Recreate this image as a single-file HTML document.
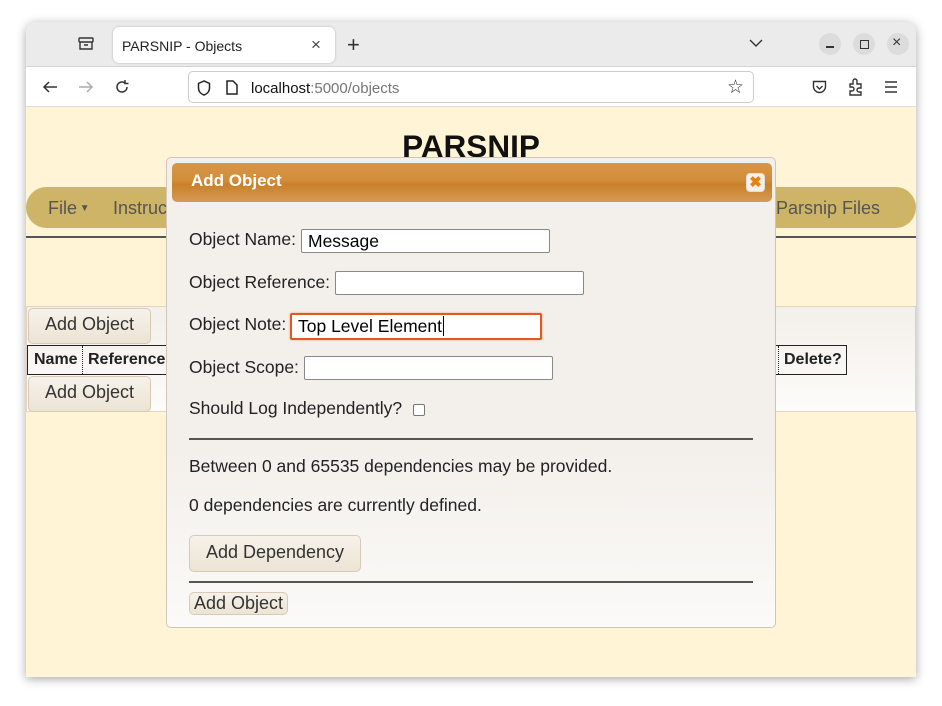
<!DOCTYPE html>
<html><head><style>
*{box-sizing:border-box;margin:0;padding:0}
body{width:942px;height:706px;background:#fff;font-family:"Liberation Sans",sans-serif;position:relative;overflow:hidden}
.win{position:absolute;left:26px;top:22px;width:890px;height:655px;border-radius:10px 10px 0 0;overflow:hidden;box-shadow:0 2px 10px rgba(0,0,0,.35);background:#fff4d6}
.tabbar{position:absolute;left:0;top:0;width:890px;height:45px;background:#ebebeb;border-bottom:1px solid #d4d4d4}
.tab{position:absolute;left:87px;top:5px;width:222px;height:36px;background:#fff;border-radius:6px;box-shadow:0 0 2px rgba(0,0,0,.25);font-size:14px;color:#222;padding:11px 0 0 9px}
.toolbar{position:absolute;left:0;top:45px;width:890px;height:40px;background:#fff;border-bottom:1px solid #ddd}
.url{position:absolute;left:162px;top:4px;width:566px;height:32px;border:1px solid #ccc;border-radius:5px;font-size:15px;padding:8px 0 0 62px;color:#111}
.abs{position:absolute}
.circ{position:absolute;width:22px;height:22px;border-radius:50%;background:#dcdcdc;top:11px}
.nav{position:absolute;left:0;top:165px;width:890px;height:41px;background:#cdb466;border-radius:21px;font-size:18px;color:#555}
.btn{position:absolute;border:1px solid #d8c9b4;border-radius:5px;background:linear-gradient(#f6f2ea,#ece4d4);font-size:18px;color:#333;text-align:center}
.dlg{position:absolute;left:140px;top:135px;width:610px;height:471px;background:linear-gradient(#f3f0eb 0,#f3f0eb 62%,#fbfaf8 100%);border:1px solid #cfc6bb;border-radius:5px}
.hd{position:absolute;left:5px;top:5px;width:600px;height:39px;border-radius:5px;background:linear-gradient(#d69648,#d28d38 45%,#c98029 55%,#d69a55);color:#fff;font-weight:bold;font-size:17px;padding:8px 0 0 19px}
.lbl{position:absolute;font-size:17.5px;color:#222}
.inp{position:absolute;height:24px;background:#fff;border:1px solid #888;border-radius:2px;font-size:17.5px;padding:1px 6px;color:#000}
.hr{position:absolute;left:22px;width:564px;height:2px;background:#555}
</style></head><body>
<div class="win">
 <div class="tabbar">
  <svg class="abs" style="left:52px;top:15px" width="16" height="14"><rect x="1" y="1" width="14" height="4" rx="1" fill="none" stroke="#333" stroke-width="1.4"/><path d="M2 5v7h12V5M6 8h4" fill="none" stroke="#333" stroke-width="1.4"/></svg>
  <div class="tab">PARSNIP - Objects<span class="abs" style="left:198px;top:8px;font-size:17px;color:#444">×</span></div>
  <span class="abs" style="left:321px;top:10px;font-size:22px;color:#333">+</span>
  <svg class="abs" style="left:723px;top:17px" width="14" height="9"><path d="M1 1l6 6 6-6" fill="none" stroke="#333" stroke-width="1.4"/></svg>
  <div class="circ" style="left:793px"></div><div class="abs" style="left:800px;top:24px;width:8px;height:1.5px;background:#333"></div>
  <div class="circ" style="left:827px"></div><div class="abs" style="left:834px;top:18px;width:9px;height:9px;border:1.4px solid #333"></div>
  <div class="circ" style="left:861px"></div><span class="abs" style="left:866px;top:12px;font-size:16px;color:#333">×</span>
 </div>
 <div class="toolbar">
  <svg class="abs" style="left:16px;top:14px" width="16" height="12"><path d="M15 6H2M7 1L2 6l5 5" fill="none" stroke="#333" stroke-width="1.5"/></svg>
  <svg class="abs" style="left:52px;top:14px" width="16" height="12"><path d="M1 6h13M9 1l5 5-5 5" fill="none" stroke="#aaa" stroke-width="1.5"/></svg>
  <svg class="abs" style="left:88px;top:12px" width="16" height="16"><path d="M13 8a5 5 0 11-2-4M11 1v3.5h3.5" fill="none" stroke="#333" stroke-width="1.5"/></svg>
  <div class="url">
   <svg class="abs" style="left:8px;top:8px" width="14" height="16"><path d="M7 1L1.5 3.5V8c0 3.5 2.5 6 5.5 7 3-1 5.5-3.5 5.5-7V3.5z" fill="none" stroke="#222" stroke-width="1.5"/></svg>
   <svg class="abs" style="left:37px;top:8px" width="12" height="15"><path d="M1 1h6l4 4v9H1z" fill="none" stroke="#222" stroke-width="1.5"/></svg>
   localhost<span style="color:#777">:5000/objects</span>
   <span class="abs" style="left:538px;top:4px;font-size:19px;color:#333">☆</span>
  </div>
  <svg class="abs" style="left:786px;top:13px" width="15" height="14"><path d="M1.5 1.5h12v5a6 6 0 01-12 0z" fill="none" stroke="#333" stroke-width="1.4"/><path d="M4.5 6l3 3 3-3" fill="none" stroke="#333" stroke-width="1.4"/></svg>
  <svg class="abs" style="left:822px;top:11px" width="16" height="18"><path d="M2 6h3V3a2 2 0 014 0v3h4v4h-2a2 2 0 000 4h2v3H2v-4h2a2 2 0 000-4H2z" fill="none" stroke="#333" stroke-width="1.4"/></svg>
  <svg class="abs" style="left:858px;top:14px" width="14" height="12"><path d="M1 1h12M1 6h12M1 11h12" stroke="#333" stroke-width="1.4"/></svg>
 </div>
 <div class="abs" style="left:0;top:106px;width:890px;text-align:center;font-size:31.5px;font-weight:bold;color:#111">PARSNIP</div>
 <div class="nav"><span class="abs" style="left:22px;top:11px">File<span style="font-size:10px;vertical-align:3px"> ▼</span></span><span class="abs" style="left:87px;top:11px">Instructions</span><span class="abs" style="left:750px;top:11px">Parsnip Files</span></div>
 <div class="abs" style="left:0;top:214px;width:890px;height:2px;background:#555"></div>
 <div class="abs" style="left:0;top:284px;width:890px;height:106px;background:linear-gradient(#f3efea,#fdfcfa);border:1px solid #e3d3c3"></div>
 <div class="btn" style="left:2px;top:286px;width:123px;height:36px;padding-top:5px">Add Object</div>
 <div class="abs" style="left:1px;top:323px;width:820px;height:30px;border:1px solid #222;font-size:16px;font-weight:bold;color:#222">
  <span class="abs" style="left:6px;top:5px">Name</span><div class="abs" style="left:54px;top:0;height:28px;border-left:1px dotted #222"></div><span class="abs" style="left:60px;top:5px">Reference</span>
  <div class="abs" style="left:750px;top:0;height:28px;border-left:1px dotted #222"></div><span class="abs" style="left:756px;top:5px">Delete?</span>
 </div>
 <div class="btn" style="left:2px;top:354px;width:123px;height:36px;padding-top:5px">Add Object</div>
 <div class="dlg">
  <div class="hd">Add Object<div class="abs" style="left:574px;top:10px;width:19px;height:19px;border:1px solid #ddd;border-radius:4px;background:#f6f1e8;color:#e88010;font-size:15px;text-align:center;line-height:17px">✖</div></div>
  <span class="lbl" style="left:22px;top:71px">Object Name:</span><div class="inp" style="left:134px;top:71px;width:249px">Message</div>
  <span class="lbl" style="left:22px;top:114px">Object Reference:</span><div class="inp" style="left:168px;top:113px;width:249px"></div>
  <span class="lbl" style="left:22px;top:156px">Object Note:</span><div class="inp" style="left:123px;top:155px;width:252px;height:27px;border:2px solid #e05a20;box-shadow:0 0 2px #f0a080">Top Level Element<span style="border-left:1px solid #000;margin-left:1px"></span></div>
  <span class="lbl" style="left:22px;top:199px">Object Scope:</span><div class="inp" style="left:137px;top:198px;width:249px"></div>
  <span class="lbl" style="left:22px;top:240px">Should Log Independently?</span><div class="abs" style="left:246px;top:246px;width:12px;height:12px;border:1.5px solid #777;border-radius:2px;background:#fff"></div>
  <div class="hr" style="top:280px"></div>
  <span class="lbl" style="left:22px;top:298px">Between 0 and 65535 dependencies may be provided.</span>
  <span class="lbl" style="left:22px;top:337px">0 dependencies are currently defined.</span>
  <div class="btn" style="left:22px;top:377px;width:172px;height:37px;padding-top:6px">Add Dependency</div>
  <div class="hr" style="top:423px"></div>
  <div class="btn" style="left:22px;top:434px;width:99px;height:23px;padding-top:0">Add Object</div>
 </div>
</div>
</body></html>
